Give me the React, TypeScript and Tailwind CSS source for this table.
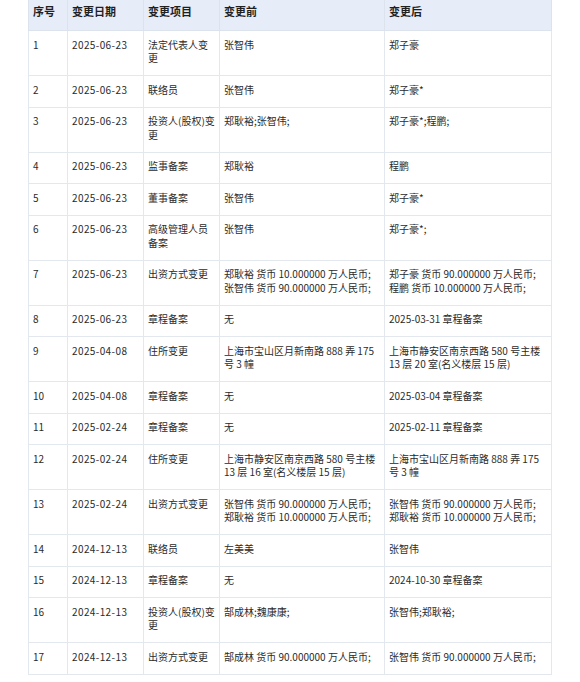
import React from 'react'

type Row = [string, string, string, string[], string[]]

const rows: Row[] = [
  ['1', '2025-06-23', '法定代表人变更', ['张智伟'], ['郑子豪']],
  ['2', '2025-06-23', '联络员', ['张智伟'], ['郑子豪*']],
  ['3', '2025-06-23', '投资人(股权)变更', ['郑耿裕;张智伟;'], ['郑子豪*;程鹏;']],
  ['4', '2025-06-23', '监事备案', ['郑耿裕'], ['程鹏']],
  ['5', '2025-06-23', '董事备案', ['张智伟'], ['郑子豪*']],
  ['6', '2025-06-23', '高级管理人员备案', ['张智伟'], ['郑子豪*;']],
  [
    '7',
    '2025-06-23',
    '出资方式变更',
    ['郑耿裕 货币 10.000000 万人民币;', '张智伟 货币 90.000000 万人民币;'],
    ['郑子豪 货币 90.000000 万人民币;', '程鹏 货币 10.000000 万人民币;'],
  ],
  ['8', '2025-06-23', '章程备案', ['无'], ['2025-03-31 章程备案']],
  [
    '9',
    '2025-04-08',
    '住所变更',
    ['上海市宝山区月新南路 888 弄 175 号 3 幢'],
    ['上海市静安区南京西路 580 号主楼 13 层 20 室(名义楼层 15 层)'],
  ],
  ['10', '2025-04-08', '章程备案', ['无'], ['2025-03-04 章程备案']],
  ['11', '2025-02-24', '章程备案', ['无'], ['2025-02-11 章程备案']],
  [
    '12',
    '2025-02-24',
    '住所变更',
    ['上海市静安区南京西路 580 号主楼 13 层 16 室(名义楼层 15 层)'],
    ['上海市宝山区月新南路 888 弄 175 号 3 幢'],
  ],
  [
    '13',
    '2025-02-24',
    '出资方式变更',
    ['张智伟 货币 90.000000 万人民币;', '郑耿裕 货币 10.000000 万人民币;'],
    ['张智伟 货币 90.000000 万人民币;', '郑耿裕 货币 10.000000 万人民币;'],
  ],
  ['14', '2024-12-13', '联络员', ['左美美'], ['张智伟']],
  ['15', '2024-12-13', '章程备案', ['无'], ['2024-10-30 章程备案']],
  ['16', '2024-12-13', '投资人(股权)变更', ['郜成林;魏康康;'], ['张智伟;郑耿裕;']],
  [
    '17',
    '2024-12-13',
    '出资方式变更',
    ['郜成林 货币 90.000000 万人民币;'],
    ['张智伟 货币 90.000000 万人民币;'],
  ],
]

const th = 'border border-[#dde3ec] pl-[4px] pr-[3px] pt-[4px] pb-0 h-[31px] align-top text-left font-bold text-[11px] leading-[14px] text-[#1f1f1f]'
const td = 'border border-[#e3e7ee] pl-[4px] pr-[3px] pt-[6.5px] pb-[10.5px] align-top text-[10px] leading-[13.5px] text-[#2b2b2b]'

export default function App() {
  return (
    <div
      className="w-[580px] h-[682px] overflow-hidden bg-white pl-[28px]"
      style={{ fontFamily: '"Noto Sans CJK SC", "Noto Sans", sans-serif' }}
    >
      <table className="border-collapse table-fixed w-[523px] -mt-px">
        <colgroup>
          <col className="w-[39px]" />
          <col className="w-[76px]" />
          <col className="w-[76px]" />
          <col className="w-[165px]" />
          <col className="w-[167px]" />
        </colgroup>
        <thead>
          <tr className="bg-[#e6ecf8]">
            <th className={th}>序号</th>
            <th className={th}>变更日期</th>
            <th className={th}>变更项目</th>
            <th className={th}>变更前</th>
            <th className={th}>变更后</th>
          </tr>
        </thead>
        <tbody>
          {rows.map(([no, date, item, before, after]) => (
            <tr key={no}>
              <td className={td}>{no}</td>
              <td className={td + ' tracking-[0.4px]'}>{date}</td>
              <td className={td}>{item}</td>
              <td className={td}>
                {before.map((l, i) => (
                  <div key={i}>{l}</div>
                ))}
              </td>
              <td className={td}>
                {after.map((l, i) => (
                  <div key={i}>{l}</div>
                ))}
              </td>
            </tr>
          ))}
        </tbody>
      </table>
    </div>
  )
}
